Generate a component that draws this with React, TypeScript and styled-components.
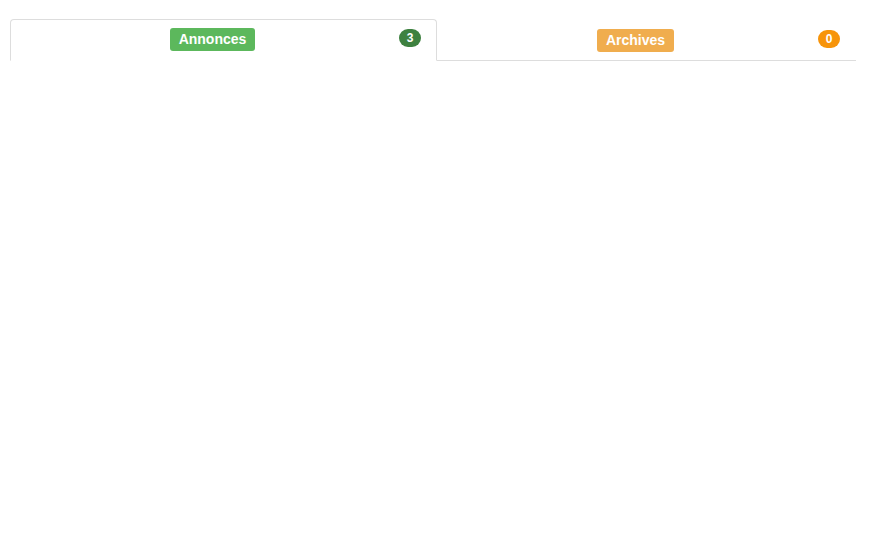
import styled, { createGlobalStyle } from 'styled-components'

const GlobalStyle = createGlobalStyle`
  body {
    margin: 0;
    background: #fff;
    font-family: "Liberation Sans", Arial, sans-serif;
    font-size: 14px;
    color: #333;
  }
`

const Page = styled.div`
  padding: 19px 0 0 10px;
`

const TabList = styled.ul`
  list-style: none;
  margin: 0;
  padding: 0;
  width: 846px;
  display: grid;
  grid-template-columns: 427fr 419fr;
  border-bottom: 1px solid #ddd;
`

const TabItem = styled.li<{ $active?: boolean }>`
  margin-bottom: -1px;
  display: flex;
  align-items: flex-start;
  padding: ${p => (p.$active ? '8px 15px 9px' : '9px 15px 8px')};
  border: 1px solid ${p => (p.$active ? '#ddd' : 'transparent')};
  border-bottom-color: ${p => (p.$active ? '#fff' : 'transparent')};
  border-radius: 4px 4px 0 0;
  background: ${p => (p.$active ? '#fff' : 'transparent')};
  cursor: pointer;
`

const LabelSlot = styled.div`
  flex: 1;
  text-align: center;
`

const Label = styled.span<{ $tone: 'success' | 'warning' }>`
  display: inline-block;
  padding: 3px 8.5px 4px;
  font-size: 14px;
  font-weight: bold;
  line-height: 16px;
  color: #fff;
  border-radius: 3px;
  background: ${p => (p.$tone === 'success' ? '#5cb85c' : '#f0ad4e')};
`

const Badge = styled.span<{ $tone: 'success' | 'warning' }>`
  margin-top: 1px;
  min-width: 8px;
  padding: 3px 7px;
  font-size: 12px;
  font-weight: bold;
  line-height: 12px;
  text-align: center;
  color: #fff;
  border-radius: 10px;
  background: ${p => (p.$tone === 'success' ? '#3e8140' : '#f7940a')};
`

const tabs = [
  { id: 'annonces', title: 'Annonces', count: 3, tone: 'success' as const, active: true },
  { id: 'archives', title: 'Archives', count: 0, tone: 'warning' as const, active: false },
]

export default function App() {
  return (
    <Page>
      <GlobalStyle />
      <TabList>
        {tabs.map(tab => (
          <TabItem key={tab.id} $active={tab.active}>
            <LabelSlot>
              <Label $tone={tab.tone}>{tab.title}</Label>
            </LabelSlot>
            <Badge $tone={tab.tone}>{tab.count}</Badge>
          </TabItem>
        ))}
      </TabList>
    </Page>
  )
}
